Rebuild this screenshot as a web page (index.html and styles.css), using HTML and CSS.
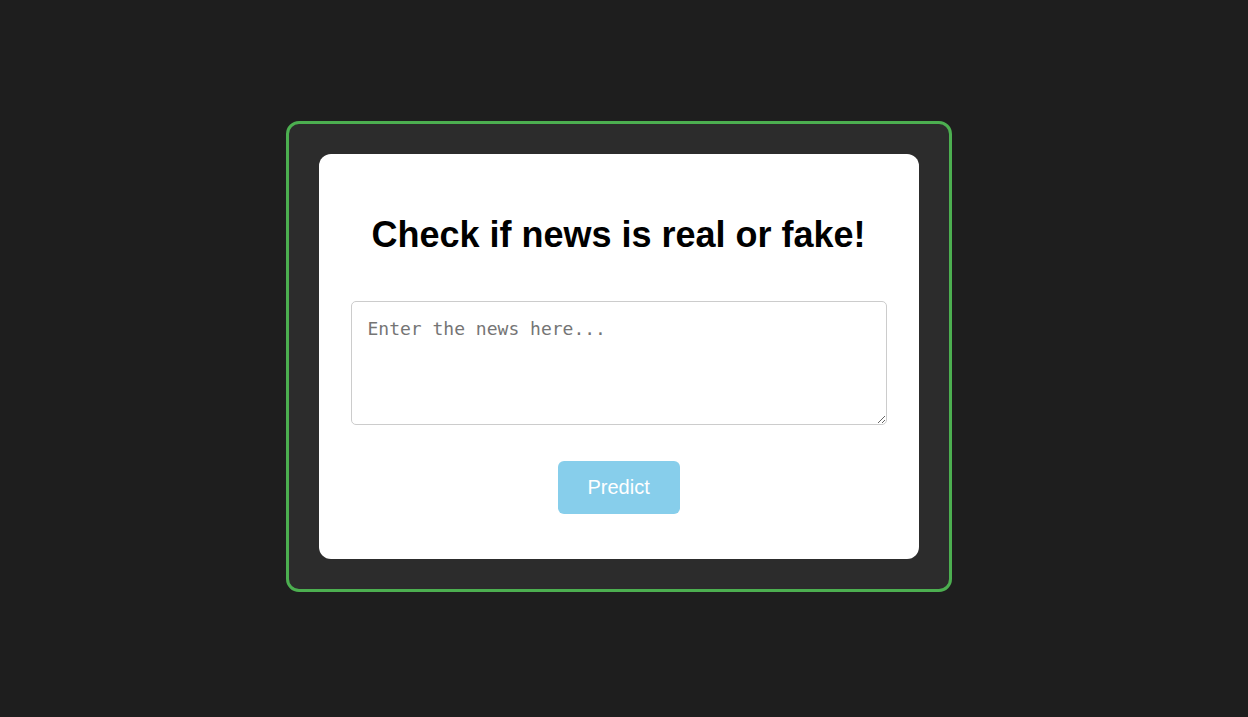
FILE: index.html
```html
<!DOCTYPE html>
<html lang="en">
<head>
<meta charset="utf-8">
<title>Fake News Detector</title>
<link rel="stylesheet" href="styles.css">
</head>
<body>
  <div class="frame">
    <div class="card">
      <h1 class="title">Check if news is real or fake!</h1>
      <textarea class="news-input" placeholder="Enter the news here..."></textarea>
      <button class="predict-btn" type="button">Predict</button>
    </div>
  </div>
</body>
</html>
```
FILE: styles.css
```css
html, body {
  margin: 0;
  padding: 0;
}

body {
  background: #1e1e1e;
  min-height: 100vh;
  box-sizing: border-box;
  padding: 0 11px 5px 0;
  display: flex;
  align-items: center;
  justify-content: center;
  font-family: "Liberation Sans", Arial, sans-serif;
}

.frame {
  background: #2c2c2c;
  border: 3px solid #4caf50;
  border-radius: 13px;
  padding: 30px;
}

.card {
  width: 600px;
  box-sizing: border-box;
  background: #ffffff;
  border-radius: 12px;
  padding: 32px 32px 45px;
  display: flex;
  flex-direction: column;
  align-items: center;
}

.title {
  margin: 28px 0 45px;
  font-size: 36px;
  line-height: 42px;
  font-weight: bold;
  color: #000;
  text-align: center;
}

.news-input {
  display: block;
  width: 100%;
  height: 124px;
  box-sizing: border-box;
  border: 1px solid #cccccc;
  border-radius: 5px;
  padding: 16px 16px 14px;
  font-family: "DejaVu Sans Mono", monospace;
  font-size: 18px;
  color: #333;
  resize: both;
}

.news-input::placeholder {
  color: #757575;
}

.predict-btn {
  margin-top: 36px;
  background: #87ceeb;
  color: #ffffff;
  border: none;
  border-radius: 6px;
  padding: 15px 30px;
  width: 122px;
  font-family: "Liberation Sans", Arial, sans-serif;
  font-size: 20px;
  line-height: 23px;
  cursor: pointer;
}
```
